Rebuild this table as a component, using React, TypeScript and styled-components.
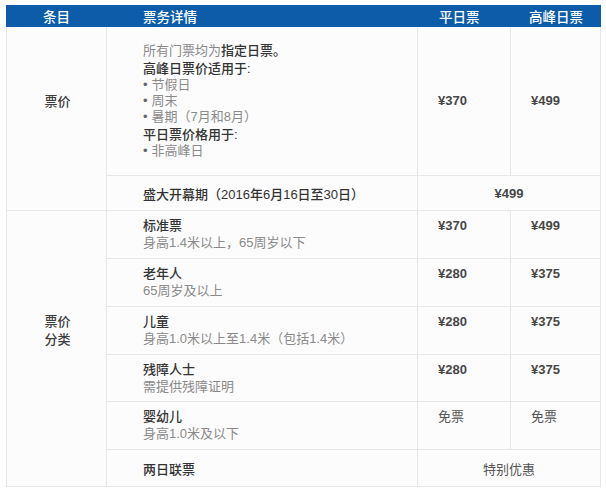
import { FC, Fragment } from "react";
import styled, { createGlobalStyle } from "styled-components";

const GlobalStyle = createGlobalStyle`
  body {
    margin: 0;
    background: #ffffff;
    font-family: "Liberation Sans", "Noto Sans CJK SC", sans-serif;
  }
`;

const Page = styled.div`
  padding: 5px 0 0 6px;
  width: 595px;
`;

const HeaderRow = styled.div`
  display: grid;
  grid-template-columns: 101px 311px 93px 90px;
  height: 22px;
  align-items: center;
  background: #0d5ca9;
  color: #ffffff;
  font-size: 13.5px;
  font-weight: 500;
`;

const HeadCell = styled.div<{ $pad?: number; $center?: boolean }>`
  padding-left: ${(p) => (p.$center ? 0 : p.$pad ?? 0)}px;
  text-align: ${(p) => (p.$center ? "center" : "left")};
`;

const Grid = styled.div`
  display: grid;
  grid-template-columns: 100px 311px 93px 90px;
  grid-template-rows: 149px 35px 48px 48px 48px 47px 48px 37px;
  border-left: 1px solid #e6e6e6;
  font-size: 13px;
  color: #444;
`;

const Cell = styled.div<{ $top?: boolean; $open?: boolean }>`
  display: flex;
  flex-direction: column;
  justify-content: ${(p) => (p.$top ? "flex-start" : "center")};
  background: #fcfcfc;
  border-right: 1px solid #e6e6e6;
  border-bottom: ${(p) => (p.$open ? "none" : "1px solid #e6e6e6")};
`;

const GroupCell = styled(Cell)<{ $rows?: number }>`
  grid-column: 1;
  grid-row: ${(p) => (p.$rows ? `auto / span ${p.$rows}` : "auto")};
  align-items: center;
  text-align: center;
  font-weight: 500;
  color: #3d3d3d;
  line-height: 18px;
  padding-left: 2px;
`;

const DetailCell = styled(Cell)`
  padding: 0 0 0 36px;
`;

const EntryCell = styled(Cell)`
  padding: 7px 0 0 36px;
  line-height: 16.5px;
`;

const PriceCell = styled(Cell)<{ $bold?: boolean }>`
  padding: ${(p) => (p.$top ? "7px" : "0")} 0 0 20px;
  line-height: 16.5px;
  font-weight: ${(p) => (p.$bold ? 700 : 400)};
  color: ${(p) => (p.$bold ? "#474747" : "#555")};
`;

const WideCell = styled(Cell)<{ $bold?: boolean }>`
  grid-column: span 2;
  align-items: center;
  font-weight: ${(p) => (p.$bold ? 700 : 400)};
  color: ${(p) => (p.$bold ? "#474747" : "#555")};
`;

const Strong = styled.span`
  font-weight: 500;
  color: #333;
`;

const Muted = styled.div`
  color: #8a8a8a;
`;

const Lines = styled.div`
  line-height: 16px;
`;

const Heading = styled.div`
  margin-top: 2px;
  font-weight: 500;
  color: #333;
`;

const Bullet = styled.div`
  color: #8a8a8a;
  &::before {
    content: "•";
    margin-right: 4px;
    color: #666;
  }
`;

interface Category {
  name: string;
  note: string;
  weekday: string;
  peak: string;
}

const categories: Category[] = [
  { name: "标准票", note: "身高1.4米以上，65周岁以下", weekday: "¥370", peak: "¥499" },
  { name: "老年人", note: "65周岁及以上", weekday: "¥280", peak: "¥375" },
  { name: "儿童", note: "身高1.0米以上至1.4米（包括1.4米）", weekday: "¥280", peak: "¥375" },
  { name: "残障人士", note: "需提供残障证明", weekday: "¥280", peak: "¥375" },
  { name: "婴幼儿", note: "身高1.0米及以下", weekday: "免票", peak: "免票" },
];

const App: FC = () => {
  return (
    <Page>
      <GlobalStyle />
      <HeaderRow>
        <HeadCell $center>条目</HeadCell>
        <HeadCell $pad={36}>票务详情</HeadCell>
        <HeadCell $pad={21}>平日票</HeadCell>
        <HeadCell $pad={18}>高峰日票</HeadCell>
      </HeaderRow>
      <Grid>
        <GroupCell $open>票价</GroupCell>
        <DetailCell>
          <Lines>
            <Muted>
              所有门票均为<Strong>指定日票。</Strong>
            </Muted>
            <Heading>高峰日票价适用于:</Heading>
            <Bullet>节假日</Bullet>
            <Bullet>周末</Bullet>
            <Bullet>暑期（7月和8月）</Bullet>
            <Heading>平日票价格用于:</Heading>
            <Bullet>非高峰日</Bullet>
          </Lines>
        </DetailCell>
        <PriceCell $bold>¥370</PriceCell>
        <PriceCell $bold>¥499</PriceCell>

        <GroupCell />
        <DetailCell>
          <Strong>盛大开幕期（2016年6月16日至30日）</Strong>
        </DetailCell>
        <WideCell $bold>¥499</WideCell>

        <GroupCell $rows={5} $open>
          票价
          <br />
          分类
        </GroupCell>
        {categories.map((c) => (
          <Fragment key={c.name}>
            <EntryCell $top>
              <Strong>{c.name}</Strong>
              <Muted>{c.note}</Muted>
            </EntryCell>
            <PriceCell $top $bold={c.weekday.startsWith("¥")}>
              {c.weekday}
            </PriceCell>
            <PriceCell $top $bold={c.peak.startsWith("¥")}>
              {c.peak}
            </PriceCell>
          </Fragment>
        ))}

        <GroupCell />
        <DetailCell>
          <Strong>两日联票</Strong>
        </DetailCell>
        <WideCell>特别优惠</WideCell>
      </Grid>
    </Page>
  );
};

export default App;
